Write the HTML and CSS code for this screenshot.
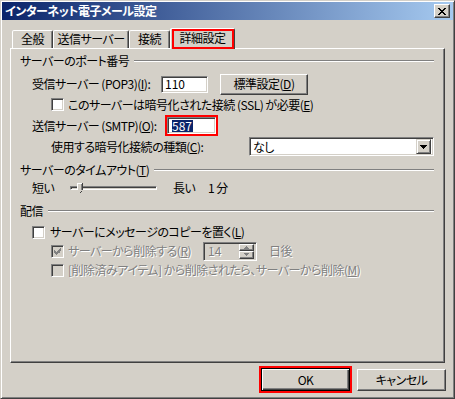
FILE: index.html
```html
<!DOCTYPE html>
<html>
<head>
    <meta charset="utf-8" />
    <title>インターネット電子メール設定</title>
    <meta name="viewport" content="width=device-width, initial-scale=1">
    <link rel="stylesheet" href="styles.css">
</head>
<body>
    <div class="window">
        <div class="titlebar">
            <span class="title">インターネット電子メール設定</span>
            <span class="close-btn">
                <svg width="8" height="7" viewBox="0 0 8 7" shape-rendering="crispEdges"><path fill="#000" d="M0 0h2v1H0zM6 0h2v1H6zM1 1h2v1H1zM5 1h2v1H5zM2 2h4v1H2zM3 3h2v1H3zM2 4h4v1H2zM1 5h2v1H1zM5 5h2v1H5zM0 6h2v1H0zM6 6h2v1H6z"/></svg>
            </span>
        </div>

        <div class="tabs">
            <div class="tab tab-general">全般</div>
            <div class="tab tab-send">送信サーバー</div>
            <div class="tab tab-conn">接続</div>
            <div class="tab tab-adv active">詳細設定</div>
        </div>

        <div class="panel">
            <div class="group group-port"><span>サーバーのポート番号</span><i class="rule"></i></div>
            <div class="row row-pop">
                <label class="lbl lbl-pop">受信サーバー (POP3)(<u>I</u>):</label>
                <div class="edit edit-pop">110</div>
                <div class="btn btn-std">標準設定(<u>D</u>)</div>
            </div>
            <div class="row row-ssl sub">
                <span class="check"></span>
                <span>このサーバーは暗号化された接続 (SSL) が必要(<u>E</u>)</span>
            </div>
            <div class="row row-smtp">
                <label class="lbl lbl-smtp">送信サーバー (SMTP)(<u>O</u>):</label>
                <div class="edit edit-smtp marked"><span class="sel">587</span></div>
            </div>
            <div class="row row-type sub">
                <label>使用する暗号化接続の種類(<u>C</u>):</label>
                <div class="combo">
                    <span class="combo-text">なし</span>
                    <span class="combo-btn">
                        <svg width="7" height="4" viewBox="0 0 7 4" shape-rendering="crispEdges"><path fill="#000" d="M0 0h7v1H0zM1 1h5v1H1zM2 2h3v1H2zM3 3h1v1H3z"/></svg>
                    </span>
                </div>
            </div>

            <div class="group group-timeout"><span>サーバーのタイムアウト(<u>T</u>)</span><i class="rule"></i></div>
            <div class="row row-slider">
                <span class="lbl lbl-short">短い</span>
                <div class="slider">
                    <span class="track"></span>
                    <svg class="thumb" width="6" height="10" viewBox="0 0 6 10" shape-rendering="crispEdges">
                        <path fill="#d4d0c8" d="M0 0h6v7l-3 3-3-3z"/>
                        <path fill="#fff" d="M0 0h5v1H1v6H0z"/>
                        <path fill="#404040" d="M5 0h1v7H5zM3 9h1v1H3zM4 8h1v1H4z"/>
                        <path fill="#808080" d="M4 1h1v6H4z"/>
                    </svg>
                </div>
                <span class="lbl lbl-long">長い</span>
                <span>1 分</span>
            </div>

            <div class="group group-deliver"><span>配信</span><i class="rule"></i></div>
            <div class="row row-copy">
                <span class="check"></span>
                <span>サーバーにメッセージのコピーを置く(<u>L</u>)</span>
            </div>
            <div class="row row-remove sub disabled">
                <div class="lbl lbl-remove">
                    <span class="check checked">
                        <svg width="7" height="7" viewBox="0 0 7 7" shape-rendering="crispEdges"><path fill="#808080" d="M6 0h1v3H6zM5 1h1v4H5zM4 2h1v3H4zM0 2h1v3H0zM1 3h1v3H1zM3 3h1v3H3zM2 4h1v3H2z"/></svg>
                    </span>
                    <span>サーバーから削除する(<u>R</u>)</span>
                </div>
                <div class="spin">
                    <span class="spin-text">14</span>
                    <span class="spin-btns">
                        <span class="spin-btn"><svg width="5" height="3" viewBox="0 0 5 3" shape-rendering="crispEdges"><path fill="#808080" d="M2 0h1v1H2zM1 1h3v1H1zM0 2h5v1H0z"/></svg></span>
                        <span class="spin-btn"><svg width="5" height="3" viewBox="0 0 5 3" shape-rendering="crispEdges"><path fill="#808080" d="M0 0h5v1H0zM1 1h3v1H1zM2 2h1v1H2z"/></svg></span>
                    </span>
                </div>
                <span class="days">日後</span>
            </div>
            <div class="row row-trash sub disabled">
                <span class="check off"></span>
                <span>[削除済みアイテム] から削除されたら、サーバーから削除(<u>M</u>)</span>
            </div>
        </div>

        <div class="actions">
            <div class="btn btn-ok marked">OK</div>
            <div class="btn btn-cancel">キャンセル</div>
        </div>
    </div>
</body>
</html>
```

FILE: styles.css
```css
* {
    box-sizing: border-box;
}
html, body {
    margin: 0;
    padding: 0;
}
body {
    width: 455px;
    height: 399px;
    overflow: hidden;
    background: #d4d0c8;
    color: #000;
    font-family: "Noto Sans CJK JP", sans-serif;
    font-size: 12px;
    line-height: 14px;
    letter-spacing: -0.5px;
    font-feature-settings: "palt";
}
u {
    text-decoration: underline;
    text-underline-offset: 1px;
}

/* window frame */
.window {
    width: 455px;
    height: 399px;
    border: 1px solid;
    border-color: #d4d0c8 #404040 #404040 #d4d0c8;
    box-shadow: inset 1px 1px #fff, inset -1px -1px #808080;
    padding: 1px;
    display: flex;
    flex-direction: column;
}
.titlebar {
    height: 18px;
    flex: none;
    display: flex;
    align-items: center;
    padding: 0 3px;
    background: linear-gradient(to right, #0a246a, #a6caf0);
}
.title {
    flex: 1;
    color: #fff;
    font-weight: bold;
}
.close-btn {
    width: 16px;
    height: 14px;
    display: flex;
    align-items: center;
    justify-content: center;
    background: #d4d0c8;
    border: 1px solid;
    border-color: #fff #404040 #404040 #fff;
    box-shadow: inset -1px -1px #808080;
}

/* tabs */
.tabs {
    position: relative;
    z-index: 1;
    height: 20px;
    margin: 8px 0 0 10px;
    display: flex;
    align-items: flex-end;
}
.tab {
    height: 18px;
    display: flex;
    align-items: center;
    justify-content: center;
    padding-bottom: 1px;
    border: 1px solid;
    border-bottom: none;
    border-color: #fff #404040 transparent #fff;
    border-radius: 2px 2px 0 0;
    box-shadow: inset -1px 0 #808080;
    background: #d4d0c8;
}
.tab-general { width: 41px; }
.tab-send { width: 76px; }
.tab-conn { width: 41px; }
.tab-adv { width: 65px; }
.tab.active {
    position: relative;
    height: 21px;
    margin-bottom: -1px;
    padding-bottom: 3px;
}
.tab.active::after {
    content: "";
    position: absolute;
    top: 0;
    left: 1px;
    right: 0;
    bottom: 0;
    border: 2px solid #f00;
}

/* page */
.panel {
    height: 315px;
    flex: none;
    margin: 0 8px;
    padding: 0 10px 0 9px;
    border: 1px solid;
    border-color: #fff #404040 #404040 #fff;
    box-shadow: inset -1px -1px #808080;
}
.group {
    height: 18px;
    display: flex;
    align-items: center;
}
.rule {
    flex: 1;
    height: 2px;
    margin-left: 5px;
    border-top: 1px solid #808080;
    border-bottom: 1px solid #fff;
}
.group-port { margin-top: 3px; }
.group-timeout { margin-top: 4px; }
.group-deliver { margin-top: 5px; }

.row {
    display: flex;
    align-items: center;
    padding-left: 12px;
}
.row.sub {
    padding-left: 31px;
}
.row-pop { margin-top: 3px; height: 22px; }
.row-ssl { margin-top: 1px; height: 17px; }
.row-smtp { margin-top: 2px; height: 21px; }
.row-type { height: 21px; }
.row-slider { height: 18px; }
.row-copy { margin-top: 3px; height: 18px; }
.row-remove { height: 20px; }
.row-trash { margin-top: 1px; height: 16px; }

.lbl {
    flex: none;
    display: flex;
    align-items: center;
}
.lbl-pop { width: 129px; }
.lbl-smtp { width: 135px; }
.lbl-short { width: 38px; }
.lbl-long { width: 35px; margin-left: 16px; }
.lbl-remove { width: 152px; }

.disabled {
    color: #808080;
    text-shadow: 1px 1px #fff;
}

/* controls */
.edit, .combo, .spin {
    display: flex;
    align-items: center;
    background: #fff;
    border: 1px solid;
    border-color: #808080 #fff #fff #808080;
    box-shadow: inset 1px 1px #404040, inset -1px -1px #d4d0c8;
}
.edit {
    height: 17px;
    padding-left: 3px;
    letter-spacing: 0;
}
.edit-pop { width: 47px; }
.edit-smtp { width: 49px; padding-left: 4px; }
.sel {
    background: #0a246a;
    color: #fff;
    line-height: 12px;
    padding-right: 1px;
}
.marked {
    outline: 2px solid #f00;
}

.btn {
    display: flex;
    align-items: center;
    justify-content: center;
    background: #d4d0c8;
    border: 1px solid;
    border-color: #fff #404040 #404040 #fff;
    box-shadow: inset -1px -1px #808080;
}
.btn-std {
    width: 88px;
    height: 21px;
    margin-left: 12px;
}

.check {
    flex: none;
    width: 13px;
    height: 13px;
    margin-right: 4px;
    display: flex;
    align-items: center;
    justify-content: center;
    background: #fff;
    border: 1px solid;
    border-color: #808080 #fff #fff #808080;
    box-shadow: inset 1px 1px #404040, inset -1px -1px #d4d0c8;
}
.row-copy .check { margin-right: 5px; }
.check.checked, .check.off {
    background: #d4d0c8;
}

.combo {
    width: 185px;
    height: 19px;
    margin-left: auto;
    padding: 2px 2px 2px 3px;
}
.combo-text {
    flex: 1;
}
.combo-btn {
    width: 15px;
    height: 15px;
    display: flex;
    align-items: center;
    justify-content: center;
    background: #d4d0c8;
    border: 1px solid;
    border-color: #d4d0c8 #404040 #404040 #d4d0c8;
    box-shadow: inset 1px 1px #fff, inset -1px -1px #808080;
}

.slider {
    position: relative;
    width: 87px;
    height: 18px;
    display: flex;
    align-items: center;
}
.track {
    width: 100%;
    height: 4px;
    border: 1px solid;
    border-color: #808080 #fff #fff #808080;
    box-shadow: inset 1px 1px #404040, inset -1px -1px #d4d0c8;
}
.thumb {
    position: absolute;
    left: 7px;
    top: 4px;
}

.spin {
    width: 54px;
    height: 19px;
    margin-left: 0;
    padding: 2px 2px 2px 4px;
    background: #d4d0c8;
    letter-spacing: 0;
}
.spin-text {
    flex: 1;
}
.spin-btns {
    width: 15px;
    height: 15px;
    display: flex;
    flex-direction: column;
}
.spin-btn {
    flex: 1;
    display: flex;
    align-items: center;
    justify-content: center;
    border: 1px solid;
    border-color: #fff #404040 #404040 #fff;
    box-shadow: inset -1px -1px #808080;
}
.days {
    margin-left: 12px;
}

/* dialog buttons */
.actions {
    display: flex;
    justify-content: flex-end;
    gap: 7px;
    margin: 6px 7px 0 0;
}
.btn-ok, .btn-cancel {
    width: 89px;
    height: 22px;
}
.btn-ok {
    height: 23px;
    margin-top: -1px;
    border: 1px solid #000;
    box-shadow: inset 1px 1px #fff, inset -1px -1px #404040, inset -2px -2px #808080;
}
```
